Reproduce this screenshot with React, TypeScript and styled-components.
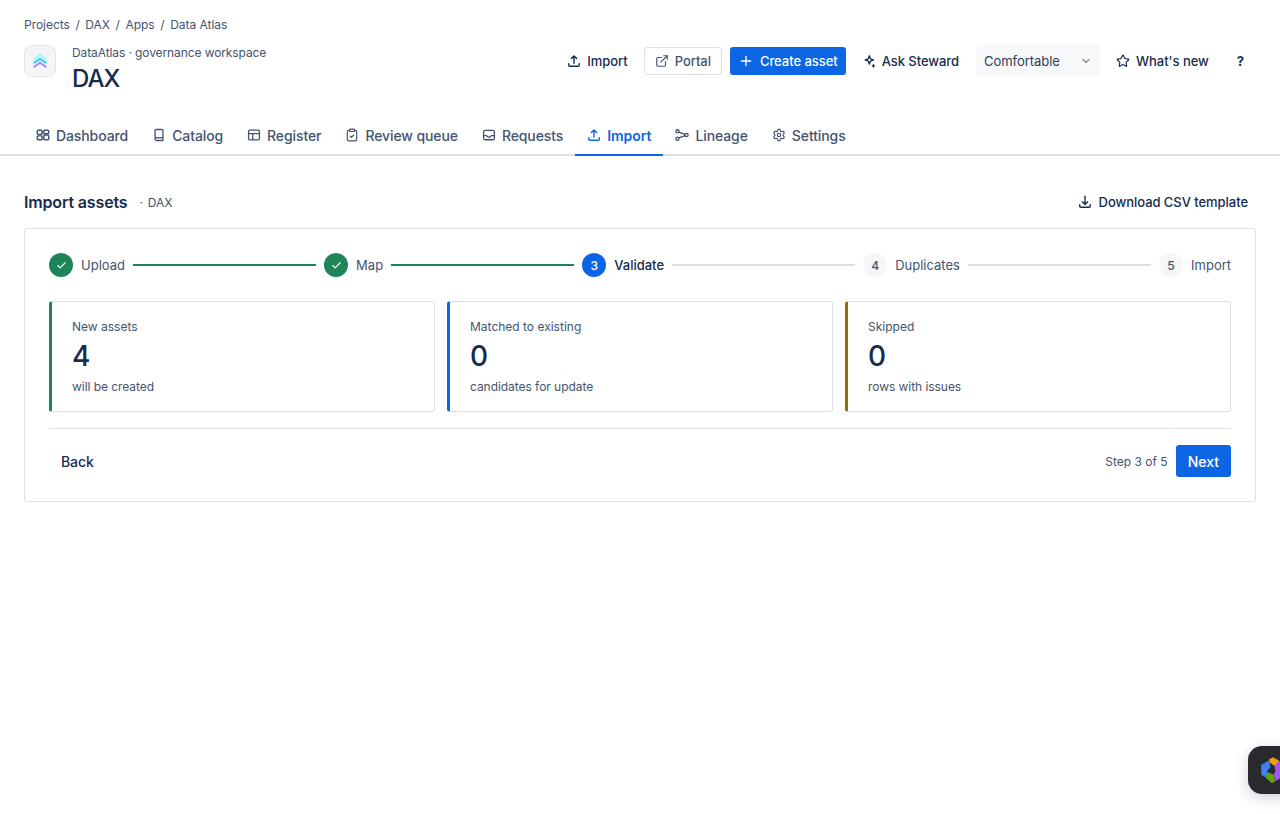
import React from "react";
import styled, { createGlobalStyle } from "styled-components";
import { Check, ChevronDown, ClipboardCheck, ExternalLink, Plus, Settings, Star } from "lucide-react";

const GlobalStyle = createGlobalStyle`
  * { box-sizing: border-box; }
  html, body { margin: 0; background: #fff; }
  body {
    font-family: Inter, "Noto Sans", sans-serif;
    color: #172b4d;
    -webkit-font-smoothing: antialiased;
  }
`;

const UploadIcon = ({ size = 14 }: { size?: number }) => (
  <svg width={size} height={size} viewBox="0 0 16 16" fill="none" stroke="currentColor" strokeWidth="1.6" strokeLinecap="round" strokeLinejoin="round">
    <path d="M8 10.5V2.5M5 5.2 8 2.2l3 3" />
    <path d="M2 11v1.8c0 .7.5 1.2 1.2 1.2h9.6c.7 0 1.2-.5 1.2-1.2V11" />
  </svg>
);

const DownloadIcon = () => (
  <svg width="14" height="14" viewBox="0 0 16 16" fill="none" stroke="currentColor" strokeWidth="1.6" strokeLinecap="round" strokeLinejoin="round">
    <path d="M8 1.5v9M5 7.8l3 3 3-3" />
    <path d="M2 11v1.8c0 .7.5 1.2 1.2 1.2h9.6c.7 0 1.2-.5 1.2-1.2V11" />
  </svg>
);

const DashboardIcon = () => (
  <svg width="14" height="14" viewBox="0 0 16 16" fill="none" stroke="currentColor" strokeWidth="1.7" strokeLinejoin="round">
    <rect x="1.5" y="2.5" width="5.5" height="5" rx="1" />
    <rect x="9" y="2.5" width="5.5" height="4" rx="1" />
    <rect x="1.5" y="9" width="5.5" height="4.5" rx="1" />
    <rect x="9" y="8" width="5.5" height="5.5" rx="1" />
  </svg>
);

const CatalogIcon = () => (
  <svg width="14" height="14" viewBox="0 0 16 16" fill="none" stroke="currentColor" strokeWidth="1.5" strokeLinejoin="round">
    <path d="M3.5 12.5V2.8c0-.6.5-1.1 1.1-1.1h6.8c.6 0 1.1.5 1.1 1.1v11.5H5.2c-.9 0-1.7-.8-1.7-1.8Z" />
    <path d="M3.5 11.2h9" />
  </svg>
);

const RegisterIcon = () => (
  <svg width="14" height="14" viewBox="0 0 16 16" fill="none" stroke="currentColor" strokeWidth="1.5" strokeLinejoin="round">
    <rect x="1.8" y="2.5" width="12.4" height="11" rx="1.2" />
    <path d="M1.8 6.5h12.4M6.5 6.5v7" />
  </svg>
);

const InboxIcon = () => (
  <svg width="14" height="14" viewBox="0 0 16 16" fill="none" stroke="currentColor" strokeWidth="1.5" strokeLinejoin="round">
    <rect x="1.8" y="2.8" width="12.4" height="10.6" rx="1.6" />
    <path d="M1.8 8.8h3.6c.3 1.2 1.3 1.8 2.6 1.8s2.3-.6 2.6-1.8h3.6" />
  </svg>
);

const LineageIcon = () => (
  <svg width="14" height="14" viewBox="0 0 16 16" fill="none" stroke="currentColor" strokeWidth="1.5">
    <circle cx="2.8" cy="3.8" r="1.8" />
    <circle cx="2.8" cy="12.2" r="1.8" />
    <circle cx="13.2" cy="8" r="1.8" />
    <path d="M4.4 4.6l7.1 2.7M4.4 11.4l7.1-2.7" />
  </svg>
);

const SparkleIcon = () => (
  <svg width="14" height="14" viewBox="0 0 16 16" fill="none" stroke="currentColor" strokeWidth="1.5" strokeLinejoin="round">
    <path d="M7 3.2 8.3 6.7 11.8 8 8.3 9.3 7 12.8 5.7 9.3 2.2 8 5.7 6.7Z" transform="translate(1.4 -1.2)" />
    <path d="M13 12.2v2.6M11.7 13.5h2.6" strokeLinecap="round" />
  </svg>
);

const LogoMark = () => (
  <svg width="14" height="16" viewBox="0 0 14 16" fill="none" strokeWidth="2" strokeLinecap="square">
    <path d="M1.5 5.6 7 1.8l5.5 3.8" stroke="#a5f3fc" />
    <path d="M1.5 9.6 7 5.8l5.5 3.8" stroke="#22d3ee" />
    <path d="M1.5 13.6 7 9.8l5.5 3.8" stroke="#a78bfa" />
  </svg>
);

const WidgetMark = () => (
  <svg width="22" height="26" viewBox="0 0 22 26" strokeWidth="1" strokeLinejoin="round">
    <path d="M8.5 2.5 12 .8 18 4.2 13.5 8.5 9.5 5.5Z" fill="#f59e0b" stroke="#f59e0b" />
    <path d="M14 9 18.5 5 21.5 7V19.5L14.5 23.5 13.5 17 15 14Z" fill="#a855f7" stroke="#a855f7" />
    <path d="M.8 8 8 4 9 10.5 6 13V16.5L3.5 19.5.8 17.5Z" fill="#3b82f6" stroke="#3b82f6" />
    <path d="M4.5 20 7 16 12.5 18 13.5 24.5 10.5 25.5Z" fill="#65a30d" stroke="#65a30d" />
  </svg>
);

const Page = styled.div`
  min-height: 814px;
  background: #fff;
`;

const TopArea = styled.header`
  padding: 15px 24px 0;
`;

const Breadcrumbs = styled.nav`
  display: flex;
  gap: 5.6px;
  height: 18px;
  align-items: center;
  font-size: 12px;
  letter-spacing: -0.03px;
  color: #44546f;
`;

const HeaderRow = styled.div`
  display: flex;
  align-items: flex-start;
  justify-content: space-between;
  margin-top: 12px;
  height: 48px;
`;

const Brand = styled.div`
  display: flex;
  gap: 16px;
`;

const LogoBox = styled.div`
  display: flex;
  align-items: center;
  justify-content: center;
  width: 32px;
  height: 32px;
  background: #f3f5f9;
  border: 1px solid #dfe3ea;
  border-radius: 8px;
`;

const BrandText = styled.div`
  display: flex;
  flex-direction: column;
`;

const Workspace = styled.div`
  font-size: 12px;
  line-height: 16px;
  letter-spacing: -0.1px;
  color: #44546f;
`;

const Title = styled.h1`
  margin: 0;
  font-size: 24px;
  line-height: 36px;
  font-weight: 500;
  letter-spacing: -1px;
  color: #172b4d;
`;

const Actions = styled.div`
  display: flex;
  align-items: center;
  height: 32px;
  gap: 4px;
`;

const ActionButton = styled.button<{ $variant?: "ghost" | "outline" | "primary" }>`
  display: inline-flex;
  align-items: center;
  gap: 6px;
  height: 28px;
  padding: 0 ${({ $variant }) => ($variant === "outline" ? "10px" : $variant === "primary" ? "8px" : "12px")};
  margin-left: ${({ $variant }) => ($variant === "primary" ? "4px" : "0")};
  font: 500 13px Inter, sans-serif;
  letter-spacing: -0.05px;
  border-radius: 3px;
  cursor: pointer;
  border: ${({ $variant }) => ($variant === "outline" ? "1px solid #dcdfe4" : "none")};
  background: ${({ $variant }) => ($variant === "primary" ? "#0c66e4" : "transparent")};
  color: ${({ $variant }) =>
    $variant === "primary" ? "#fff" : $variant === "outline" ? "#44546f" : "#172b4d"};
`;

const DensitySelect = styled.div`
  display: flex;
  align-items: center;
  justify-content: space-between;
  width: 124px;
  height: 32px;
  margin-left: 1px;
  padding: 0 8px;
  background: #f7f8f9;
  border-radius: 3px;
  font-size: 13px;
  letter-spacing: -0.05px;
  color: #2c3e5d;
  svg { color: #8590a2; }
`;

const HelpButton = styled(ActionButton)`
  font-weight: 700;
`;

const TabBar = styled.nav`
  display: flex;
  align-items: stretch;
  height: 38px;
  margin-top: 25px;
  padding: 0 24px;
  border-bottom: 2px solid #dcdfe4;
`;

const Tab = styled.div<{ $active?: boolean }>`
  display: flex;
  align-items: center;
  gap: 6px;
  height: 38px;
  padding: 0 12px 2px;
  font-size: 14px;
  font-weight: ${({ $active }) => ($active ? 600 : 500)};
  letter-spacing: ${({ $active }) => ($active ? "-0.05px" : "-0.1px")};
  color: ${({ $active }) => ($active ? "#0c66e4" : "#44546f")};
  border-bottom: 2px solid ${({ $active }) => ($active ? "#0c66e4" : "transparent")};
`;

const Main = styled.main`
  padding: 32px 24px 0;
`;

const SectionHead = styled.div`
  display: flex;
  align-items: center;
  justify-content: space-between;
  height: 28px;
  margin-bottom: 12px;
`;

const SectionTitle = styled.div`
  display: flex;
  align-items: center;
  gap: 12px;
`;

const Heading = styled.h2`
  margin: 0;
  font-size: 16px;
  font-weight: 600;
  letter-spacing: -0.15px;
  color: #172b4d;
`;

const Muted = styled.span`
  font-size: 12px;
  color: #44546f;
`;

const ProjectTag = styled(Muted)`
  word-spacing: 1.5px;
`;

const DownloadLink = styled(ActionButton)`
  padding: 0 8px;
  gap: 7px;
`;

const Card = styled.section`
  padding: 24px;
  border: 1px solid #dcdfe4;
  border-radius: 3px;
`;

const Stepper = styled.div`
  display: flex;
  align-items: center;
  gap: 8px;
  height: 24px;
`;

const StepDot = styled.span<{ $state: "done" | "current" | "todo" }>`
  display: inline-flex;
  align-items: center;
  justify-content: center;
  width: 24px;
  height: 24px;
  flex: none;
  border-radius: 50%;
  font-size: 12px;
  font-weight: 500;
  color: ${({ $state }) => ($state === "todo" ? "#44546f" : "#fff")};
  background: ${({ $state }) =>
    $state === "done" ? "#1f845a" : $state === "current" ? "#0c66e4" : "#f5f6f8"};
`;

const StepLabel = styled.span<{ $current?: boolean }>`
  font-size: 13px;
  font-weight: ${({ $current }) => ($current ? 500 : 400)};
  color: ${({ $current }) => ($current ? "#172b4d" : "#44546f")};
`;

const StepLine = styled.span<{ $done?: boolean }>`
  flex: 1;
  height: 2px;
  background: ${({ $done }) => ($done ? "#1f845a" : "#dcdfe4")};
`;

const StatGrid = styled.div`
  display: grid;
  grid-template-columns: repeat(3, 1fr);
  gap: 12px;
  margin-top: 24px;
`;

const StatCard = styled.div<{ $accent: string }>`
  height: 111px;
  padding: 16px 20px;
  border: 1px solid #dcdfe4;
  border-left: 3px solid ${({ $accent }) => $accent};
  border-radius: 3px;
`;

const StatLabel = styled.div`
  font-size: 12px;
  line-height: 18px;
  color: #44546f;
`;

const StatValue = styled.div`
  margin-top: 3px;
  font-size: 28px;
  line-height: 34px;
  font-weight: 500;
  color: #172b4d;
`;

const StatNote = styled.div`
  margin-top: 6px;
  font-size: 12px;
  line-height: 16px;
  letter-spacing: -0.05px;
  color: #44546f;
`;

const Footer = styled.div`
  display: flex;
  align-items: center;
  justify-content: space-between;
  margin-top: 16px;
  padding-top: 16px;
  border-top: 1px solid #dcdfe4;
`;

const BackButton = styled.button`
  height: 32px;
  padding: 0 12px;
  border: none;
  background: none;
  font: 500 14px Inter, sans-serif;
  letter-spacing: -0.07px;
  color: #172b4d;
`;

const FooterRight = styled.div`
  display: flex;
  align-items: center;
  gap: 8px;
`;

const NextButton = styled.button`
  height: 32px;
  padding: 0 12px;
  border: none;
  border-radius: 3px;
  background: #0c66e4;
  color: #fff;
  font: 500 14px Inter, sans-serif;
`;

const Widget = styled.div`
  position: fixed;
  right: -16px;
  bottom: 20px;
  display: flex;
  align-items: center;
  justify-content: center;
  width: 48px;
  height: 48px;
  background: #292a2e;
  border-radius: 14px;
  box-shadow: 0 4px 14px rgba(9, 30, 66, 0.2);
`;

const crumbs = ["Projects", "DAX", "Apps", "Data Atlas"];

const tabs = [
  { label: "Dashboard", icon: <DashboardIcon /> },
  { label: "Catalog", icon: <CatalogIcon /> },
  { label: "Register", icon: <RegisterIcon /> },
  { label: "Review queue", icon: <ClipboardCheck size={14} /> },
  { label: "Requests", icon: <InboxIcon /> },
  { label: "Import", icon: <UploadIcon />, active: true },
  { label: "Lineage", icon: <LineageIcon /> },
  { label: "Settings", icon: <Settings size={14} /> },
];

const steps: { label: string; state: "done" | "current" | "todo" }[] = [
  { label: "Upload", state: "done" },
  { label: "Map", state: "done" },
  { label: "Validate", state: "current" },
  { label: "Duplicates", state: "todo" },
  { label: "Import", state: "todo" },
];

const stats = [
  { label: "New assets", value: 4, note: "will be created", accent: "#1f845a" },
  { label: "Matched to existing", value: 0, note: "candidates for update", accent: "#0c66e4" },
  { label: "Skipped", value: 0, note: "rows with issues", accent: "#946f00" },
];

export default function App() {
  return (
    <Page>
      <GlobalStyle />
      <TopArea>
        <Breadcrumbs>
          {crumbs.map((c, i) => (
            <React.Fragment key={c}>
              {i > 0 && <span>/</span>}
              <span>{c}</span>
            </React.Fragment>
          ))}
        </Breadcrumbs>
        <HeaderRow>
          <Brand>
            <LogoBox>
              <LogoMark />
            </LogoBox>
            <BrandText>
              <Workspace>DataAtlas · governance workspace</Workspace>
              <Title>DAX</Title>
            </BrandText>
          </Brand>
          <Actions>
            <ActionButton>
              <UploadIcon />
              Import
            </ActionButton>
            <ActionButton $variant="outline">
              <ExternalLink size={14} strokeWidth={2} />
              Portal
            </ActionButton>
            <ActionButton $variant="primary">
              <Plus size={16} strokeWidth={2} />
              Create asset
            </ActionButton>
            <ActionButton>
              <SparkleIcon />
              Ask Steward
            </ActionButton>
            <DensitySelect>
              Comfortable
              <ChevronDown size={12} strokeWidth={2.5} />
            </DensitySelect>
            <ActionButton>
              <Star size={14} strokeWidth={2} />
              What's new
            </ActionButton>
            <HelpButton>?</HelpButton>
          </Actions>
        </HeaderRow>
      </TopArea>

      <TabBar>
        {tabs.map((t) => (
          <Tab key={t.label} $active={t.active}>
            {t.icon}
            {t.label}
          </Tab>
        ))}
      </TabBar>

      <Main>
        <SectionHead>
          <SectionTitle>
            <Heading>Import assets</Heading>
            <ProjectTag>· DAX</ProjectTag>
          </SectionTitle>
          <DownloadLink>
            <DownloadIcon />
            Download CSV template
          </DownloadLink>
        </SectionHead>

        <Card>
          <Stepper>
            {steps.map((s, i) => (
              <React.Fragment key={s.label}>
                {i > 0 && <StepLine $done={i < 3} />}
                <StepDot $state={s.state}>
                  {s.state === "done" ? <Check size={11} strokeWidth={2.5} /> : i + 1}
                </StepDot>
                <StepLabel $current={s.state === "current"}>{s.label}</StepLabel>
              </React.Fragment>
            ))}
          </Stepper>

          <StatGrid>
            {stats.map((s) => (
              <StatCard key={s.label} $accent={s.accent}>
                <StatLabel>{s.label}</StatLabel>
                <StatValue>{s.value}</StatValue>
                <StatNote>{s.note}</StatNote>
              </StatCard>
            ))}
          </StatGrid>

          <Footer>
            <BackButton>Back</BackButton>
            <FooterRight>
              <Muted>Step 3 of 5</Muted>
              <NextButton>Next</NextButton>
            </FooterRight>
          </Footer>
        </Card>
      </Main>

      <Widget>
        <WidgetMark />
      </Widget>
    </Page>
  );
}
